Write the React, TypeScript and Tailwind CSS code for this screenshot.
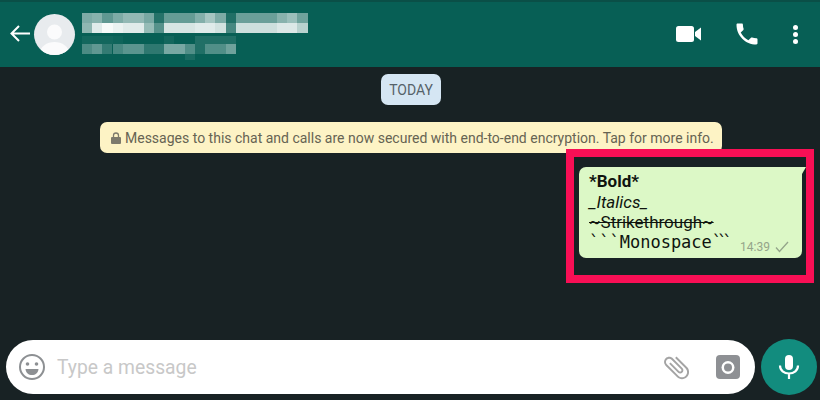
import React from 'react';

// mosaic that hides the contact name: [x, y, w, h, white opacity]
const nameBlocks: number[][] = [
  [82, 13, 10, 10, 0.48], [92, 13, 10, 10, 0.52], [102, 13, 11, 10, 0.36], [113, 13, 10, 10, 0.48],
  [123, 13, 21, 10, 0.56], [144, 13, 10, 10, 0.46], [154, 13, 10, 10, 0.12], [164, 13, 31, 10, 0.38],
  [195, 13, 10, 10, 0.5], [205, 13, 10, 10, 0.64], [215, 13, 11, 10, 0.48], [226, 13, 10, 10, 0.1],
  [236, 13, 41, 10, 0.4], [277, 13, 10, 10, 0.52], [287, 13, 10, 10, 0.6], [297, 13, 11, 10, 0.42],
  [82, 23, 10, 10, 0.55], [92, 23, 10, 10, 0.88], [102, 23, 11, 10, 0.97], [113, 23, 10, 10, 0.92],
  [123, 23, 21, 10, 0.88], [144, 23, 10, 10, 0.58], [154, 23, 10, 10, 0.32], [164, 23, 31, 10, 0.84],
  [195, 23, 20, 10, 0.88], [215, 23, 11, 10, 0.82], [226, 23, 10, 10, 0.26], [236, 23, 41, 10, 0.8],
  [277, 23, 20, 10, 0.86], [297, 23, 11, 10, 0.72],
  [82, 36, 31, 8, 0.05], [113, 36, 10, 8, 0.03], [164, 36, 10, 8, 0.05], [195, 36, 41, 8, 0.1],
  [82, 44, 10, 10, 0.28], [92, 44, 10, 10, 0.36], [102, 44, 10, 10, 0.18], [113, 44, 10, 10, 0.26],
  [123, 44, 21, 10, 0.34], [144, 44, 20, 10, 0.16], [164, 44, 21, 10, 0.46], [185, 44, 10, 10, 0.3],
  [195, 44, 10, 10, 0.1], [205, 44, 21, 10, 0.3], [226, 44, 10, 10, 0.42],
  [185, 54, 10, 6, 0.08],
];

const App = () => {
  return (
    <div className="flex h-[400px] w-[820px] flex-col overflow-hidden bg-[#182224] font-['Roboto',sans-serif]">
      {/* header */}
      <div className="flex h-[67px] shrink-0 items-center border-t-2 border-[#0a4f47] bg-[#075f55] pb-[1px]">
        <svg width="24" height="24" viewBox="0 0 24 24" className="ml-[8px] mr-[2px] shrink-0" fill="none" stroke="#fff" strokeWidth="2">
          <path d="M22 11.500H4M11 4l-7.500 7.500L11 19" />
        </svg>
        <div className="h-[41px] w-[41px] shrink-0 overflow-hidden rounded-full bg-[#e8ebee]">
          <svg viewBox="0 0 41 41" className="h-full w-full">
            <circle cx="20.500" cy="18" r="7.500" fill="#fbfbfc" />
            <path d="M5 41c1-9 8-13 15.500-13S35 32 36 41z" fill="#fbfbfc" />
          </svg>
        </div>
        <div className="flex-1 self-stretch">
          <svg width="240" height="65" viewBox="75 2 240 65" className="block">
            {nameBlocks.map(([x, y, w, h, o], i) => (
              <rect key={i} x={x} y={y} width={w} height={h} fill="#fff" opacity={o} />
            ))}
          </svg>
        </div>
        <svg width="26" height="18" viewBox="0 0 26 18" className="mr-[31px] shrink-0" fill="#fff">
          <rect x="0" y="1" width="18" height="16" rx="2.500" />
          <path d="M19 7l6-4.500v13L19 11z" />
        </svg>
        <svg width="28" height="28" viewBox="0 0 24 24" className="mr-[32px] shrink-0" fill="#fff">
          <path d="M6.600 10.800c1.400 2.800 3.800 5.100 6.600 6.600l2.200-2.200c.3-.3.700-.4 1-.2 1.100.4 2.300.6 3.600.6.600 0 1 .4 1 1V20c0 .6-.4 1-1 1C10.600 21 3 13.400 3 4c0-.6.400-1 1-1h3.500c.6 0 1 .4 1 1 0 1.300.2 2.500.6 3.600.1.300 0 .7-.2 1z" />
        </svg>
        <div className="mr-[22px] flex shrink-0 flex-col gap-[2px]">
          <div className="h-[5px] w-[5px] rounded-full bg-white" />
          <div className="h-[5px] w-[5px] rounded-full bg-white" />
          <div className="h-[5px] w-[5px] rounded-full bg-white" />
        </div>
      </div>

      {/* chat area */}
      <div className="flex flex-1 flex-col">
        <div className="ml-[2px] mt-[7px] flex h-[31px] w-[60px] items-center justify-center self-center rounded-[7px] bg-[#d5e6f3] pt-[2px] text-[14px] text-[#556269]">
          TODAY
        </div>
        <div className="ml-[100px] mt-[17px] flex h-[31px] w-[622px] items-center whitespace-nowrap rounded-[7px] bg-[#fdf3c5] pl-[11px] pt-[1px] text-[14px] text-[#666353]">
          <svg width="10" height="12" viewBox="0 0 10 12" className="mr-[4px] shrink-0" fill="#7d7a6c">
            <path d="M1 5h8a1 1 0 0 1 1 1v5a1 1 0 0 1-1 1H1a1 1 0 0 1-1-1V6a1 1 0 0 1 1-1z" />
            <path d="M2.500 5.500V3.500a2.500 2.500 0 0 1 5 0v2" fill="none" stroke="#7d7a6c" strokeWidth="1.300" />
          </svg>
          Messages to this chat and calls are now secured with end-to-end encryption. Tap for more info.
        </div>

        {/* highlighted message */}
        <div className="relative z-10 ml-[566px] mt-[-4px] h-[134px] w-[248px] border-[8px] border-[#f80f55] pl-[5px] pt-[10px]">
          <div className="relative h-[91px] w-[223px] rounded-[7px] rounded-tr-none bg-[#dcf8c6] pl-[10px] pt-[4px] text-[17px] leading-[20.500px] text-[#0f140f]">
            <div className="font-bold">*Bold*</div>
            <div className="italic">_Italics_</div>
            <div className="line-through">~Strikethrough~</div>
            <div className="-mt-[1px] whitespace-nowrap font-['DejaVu_Sans_Mono',monospace] text-[17px]">
              ```Monospace<span className="tracking-[-5px]">```</span>
            </div>
            <div className="absolute bottom-[4px] right-[13px] flex items-center gap-[5px] text-[12px] leading-[14px] text-[#94a58a]">
              14:39
              <svg width="14" height="12" viewBox="0 0 14 12" fill="none" stroke="#94a58a" strokeWidth="1.300">
                <path d="M1 6.500l3.500 4L13 1" />
              </svg>
            </div>
            <div className="absolute right-[-4px] top-0 h-0 w-0 border-r-[4px] border-t-[7px] border-r-transparent border-t-[#dcf8c6]" />
          </div>
        </div>
      </div>

      {/* input bar */}
      <div className="mb-[5px] flex shrink-0 items-center pl-[6px]">
        <div className="flex h-[54px] w-[749px] items-center rounded-full bg-white">
          <svg width="28" height="28" viewBox="0 0 28 28" className="ml-[12px] mr-[11px] shrink-0" fill="none" stroke="#8d9093" strokeWidth="2">
            <circle cx="14" cy="14" r="12" />
            <circle cx="9.500" cy="11" r="1.800" fill="#8d9093" stroke="none" />
            <circle cx="18.500" cy="11" r="1.800" fill="#8d9093" stroke="none" />
            <path d="M7.500 16h13c-.5 4-3 6-6.500 6s-6-2-6.500-6z" fill="#8d9093" stroke="none" />
          </svg>
          <div className="flex-1 pt-[3px] text-[19.300px] text-[#c8c8c8]">Type a message</div>
          <svg width="31" height="31" viewBox="0 0 24 24" className="mr-[24px] shrink-0 -rotate-45" fill="#a4a4a4">
            <path d="M16.500 6v11.500c0 2.210-1.790 4-4 4s-4-1.790-4-4V5c0-1.380 1.120-2.500 2.500-2.500s2.500 1.120 2.500 2.500v10.500c0 .55-.45 1-1 1s-1-.45-1-1V6H10v9.500c0 1.380 1.120 2.500 2.500 2.500s2.500-1.120 2.500-2.500V5c0-2.210-1.790-4-4-4S7 2.790 7 5v12.500c0 3.040 2.460 5.500 5.500 5.500s5.500-2.460 5.500-5.500V6h-1.500z" />
          </svg>
          <svg width="24" height="24" viewBox="0 0 24 24" className="mr-[15px] shrink-0">
            <rect width="24" height="24" rx="4" fill="#8e9094" />
            <circle cx="12" cy="12.500" r="6.500" fill="#fff" />
            <circle cx="12" cy="12.500" r="4" fill="#8e9094" />
          </svg>
        </div>
        <div className="ml-[6px] flex h-[56px] w-[56px] items-center justify-center rounded-full bg-[#128c7e]">
          <svg width="24" height="26" viewBox="0 0 24 26" fill="none" stroke="#fff" strokeWidth="2.200">
            <rect x="8" y="1" width="8" height="15" rx="4" fill="#fff" stroke="none" />
            <path d="M3 11.500c0 5 4 8 9 8s9-3 9-8M12 19v6" />
          </svg>
        </div>
      </div>
    </div>
  );
};

export default App;
